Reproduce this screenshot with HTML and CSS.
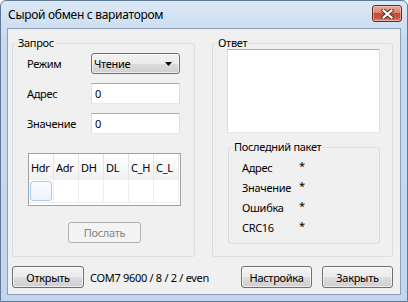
FILE: index.html
```html
<!DOCTYPE html>
<html lang="ru">
<head>
    <meta charset="UTF-8">
    <meta name="viewport" content="width=device-width, initial-scale=1.0">
    <title>Сырой обмен с вариатором</title>
    <link rel="stylesheet" href="styles.css">
</head>
<body>
    <div class="window">
        <div class="titlebar">
            <span class="title">Сырой обмен с вариатором</span>
            <button class="close" title="Закрыть">
                <svg width="13" height="10" viewBox="0 0 13 10">
                    <path d="M2.5 1.5 L10.5 8.5 M10.5 1.5 L2.5 8.5" stroke="#5a3030" stroke-width="4.2" stroke-linecap="square" fill="none"/>
                    <path d="M2.5 1.5 L10.5 8.5 M10.5 1.5 L2.5 8.5" stroke="#ffffff" stroke-width="2.2" stroke-linecap="square" fill="none"/>
                </svg>
            </button>
        </div>

        <div class="client">
            <div class="groups">
                <fieldset class="group request">
                    <legend>Запрос</legend>
                    <div class="form">
                        <label>Режим</label>
                        <div class="combo">
                            <span>Чтение</span>
                            <svg width="7" height="4" viewBox="0 0 7 4"><polygon points="0,0 7,0 3.5,4" fill="#000"/></svg>
                        </div>
                        <label>Адрес</label>
                        <input class="field" type="text" value="0">
                        <label>Значение</label>
                        <input class="field" type="text" value="0">
                    </div>

                    <div class="packet">
                        <div class="head">Hdr</div>
                        <div class="head">Adr</div>
                        <div class="head">DH</div>
                        <div class="head">DL</div>
                        <div class="head">C_H</div>
                        <div class="head">C_L</div>
                        <div class="cell"><div class="selected"></div></div>
                        <div class="cell"></div>
                        <div class="cell"></div>
                        <div class="cell"></div>
                        <div class="cell"></div>
                        <div class="cell"></div>
                    </div>

                    <button class="btn send" disabled>Послать</button>
                </fieldset>

                <fieldset class="group answer">
                    <legend>Ответ</legend>
                    <textarea class="output"></textarea>

                    <fieldset class="group last">
                        <legend>Последний пакет</legend>
                        <div class="info">
                            <span>Адрес</span><span class="star">*</span>
                            <span>Значение</span><span class="star">*</span>
                            <span>Ошибка</span><span class="star">*</span>
                            <span>CRC16</span><span class="star">*</span>
                        </div>
                    </fieldset>
                </fieldset>
            </div>

            <div class="footer">
                <button class="btn open">Открыть</button>
                <span class="port">COM7 9600 / 8 / 2 / even</span>
                <button class="btn setup">Настройка</button>
                <button class="btn quit">Закрыть</button>
            </div>
        </div>
    </div>
</body>
</html>
```

FILE: styles.css
```css
body {
    margin: 0;
    font-family: "Noto Sans", sans-serif;
    font-size: 11px;
    letter-spacing: -0.3px;
    color: #000;
}
.window {
    width: 408px;
    height: 302px;
    box-sizing: border-box;
    border: 1px solid #5f7a99;
    border-radius: 6px 6px 0 0;
    background: linear-gradient(#dbe8f6, #c8daef 40px, #c3d6ed);
    padding: 0 6px 6px;
    display: flex;
    flex-direction: column;
}
.titlebar {
    height: 27px;
    display: flex;
    align-items: center;
    padding-left: 1px;
}
.title {
    font-size: 12px;
}
.close {
    margin: 4px -1px 0 auto;
    align-self: flex-start;
    width: 30px;
    height: 17px;
    padding: 0;
    border: 1px solid #6d2a1f;
    border-radius: 3px;
    background: linear-gradient(#eaaa9c, #d98270 45%, #c54a33 50%, #c95a43 80%, #de8c74);
    box-shadow: inset 0 0 0 1px rgba(255, 220, 210, 0.5);
    display: flex;
    align-items: center;
    justify-content: center;
}
.client {
    flex: 1;
    border: 1px solid #8ca0b8;
    background: #f0f0f0;
    padding: 8px 7px 6px 4px;
    display: flex;
    flex-direction: column;
}
.groups {
    display: flex;
    gap: 17px;
}
.group {
    margin: 0;
    padding: 0;
    min-width: 0;
    box-sizing: border-box;
    border: 1px solid #d5dfe5;
    border-radius: 3px;
}
.group legend {
    margin-left: 4px;
    padding: 0 1px;
    line-height: 12px;
}
.request {
    width: 183px;
    height: 220px;
}
.answer {
    width: 181px;
    height: 220px;
}
.form {
    display: grid;
    grid-template-columns: 64px 89px;
    grid-auto-rows: 21px;
    row-gap: 9px;
    align-items: center;
    margin: 4px 0 0 14px;
}
.combo {
    box-sizing: border-box;
    height: 21px;
    border: 1px solid #707070;
    border-radius: 3px;
    background: linear-gradient(#f2f2f2, #ebebeb 50%, #dddddd 50%, #cfcfcf);
    box-shadow: inset 0 0 0 1px rgba(255, 255, 255, 0.6);
    padding: 0 7px 0 2px;
    display: flex;
    align-items: center;
    justify-content: space-between;
}
.field {
    box-sizing: border-box;
    width: 89px;
    height: 21px;
    margin: 0;
    padding: 0 3px;
    border: 1px solid #dbdfe6;
    border-top-color: #abadb3;
    border-bottom-color: #e3e9ef;
    background: #fff;
    font: inherit;
    letter-spacing: inherit;
    color: #000;
}
.packet {
    width: 153px;
    height: 53px;
    box-sizing: border-box;
    margin: 19px 0 0 15px;
    border: 1px solid #a0a0a0;
    background: #fff;
    display: grid;
    grid-template-columns: repeat(6, 25px);
    grid-template-rows: 26px 23px;
}
.head {
    box-sizing: border-box;
    border-right: 1px solid #e3e5e8;
    background: linear-gradient(#ffffff, #f7f8f9 50%, #eef0f2);
    padding-left: 2px;
    display: flex;
    align-items: center;
}
.cell {
    box-sizing: border-box;
    border-right: 1px solid #eeeeee;
    border-bottom: 1px solid #eeeeee;
    padding: 1px;
}
.selected {
    height: 100%;
    box-sizing: border-box;
    border: 1px solid #a6c9f0;
    border-radius: 3px;
    background: linear-gradient(#fafcff, #eef4fd);
}
.btn {
    box-sizing: border-box;
    height: 22px;
    padding: 0;
    border: 1px solid #707070;
    border-radius: 3px;
    background: linear-gradient(#f2f2f2, #ebebeb 48%, #dddddd 50%, #cfcfcf);
    box-shadow: inset 0 0 0 1px rgba(255, 255, 255, 0.6);
    font: inherit;
    letter-spacing: inherit;
    color: #000;
}
.btn:disabled {
    border-color: #adb2b5;
    background: #f4f4f4;
    box-shadow: none;
    color: #838383;
}
.send {
    display: block;
    width: 73px;
    height: 21px;
    margin: 16px 0 0 55px;
}
.output {
    display: block;
    box-sizing: border-box;
    width: 153px;
    height: 84px;
    margin: 0 0 0 14px;
    border: 1px solid #dbdfe6;
    border-top-color: #abadb3;
    border-bottom-color: #e3e9ef;
    resize: none;
    background: #fff;
}
.last {
    width: 152px;
    height: 103px;
    margin: 8px 0 0 15px;
}
.info {
    display: grid;
    grid-template-columns: 57px auto;
    grid-auto-rows: 20px;
    align-items: center;
    margin: 4px 0 0 13px;
}
.star {
    position: relative;
    top: -2px;
}
.footer {
    display: flex;
    align-items: center;
    margin-top: 9px;
}
.open {
    width: 72px;
}
.port {
    margin-left: 6px;
}
.setup {
    width: 71px;
    margin-left: auto;
}
.quit {
    width: 71px;
    margin-left: 10px;
}
```
